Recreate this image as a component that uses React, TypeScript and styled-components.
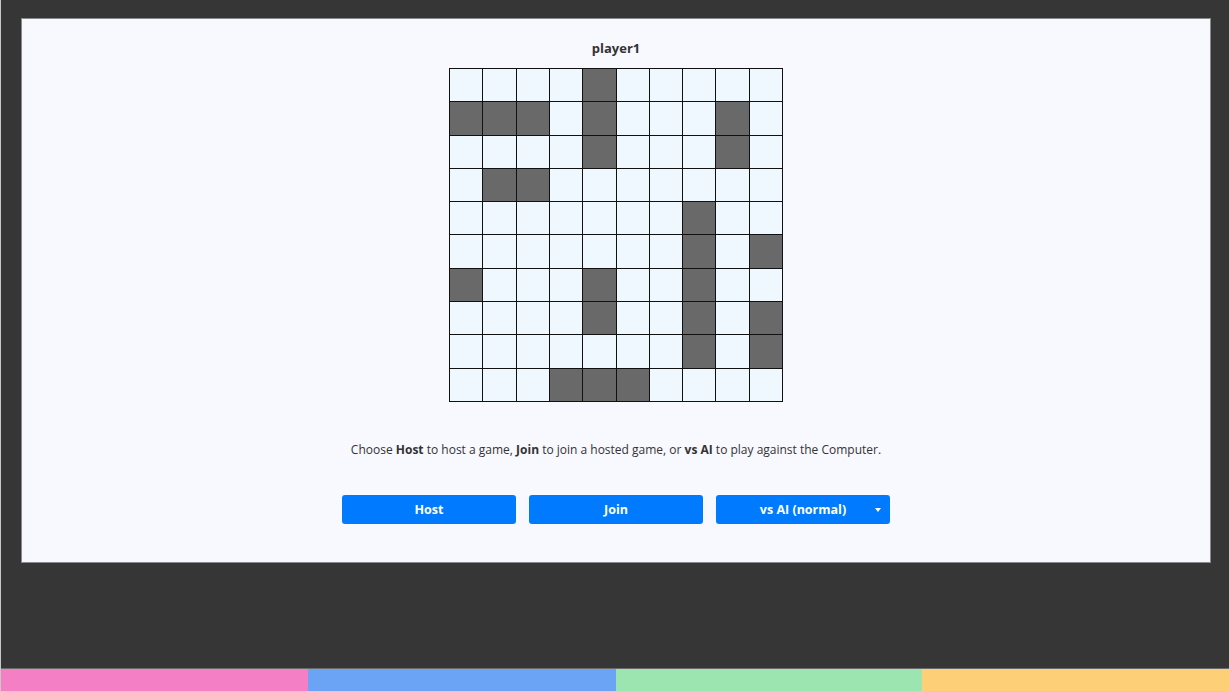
import React from "react";
import styled, { createGlobalStyle } from "styled-components";

const Global = createGlobalStyle`
  html, body { margin: 0; padding: 0; background: #363636; }
  body { font-family: "Open Sans", "Noto Sans", sans-serif; }
  * { box-sizing: border-box; }
`;

const Page = styled.div`
  display: flex;
  flex-direction: column;
  height: 692px;
  border-left: 1px solid #c8c8c8;
  border-bottom: 1px solid #d0d0d0;
  background: #363636;
`;

const Main = styled.div`
  flex: 1;
  padding: 18px 18px 0 20px;
`;

const Panel = styled.section`
  height: 545px;
  background: #f8f8ff;
  border: 1px solid #8a8a8a;
  display: flex;
  flex-direction: column;
  align-items: center;
  padding-top: 19px;
`;

const Title = styled.h2`
  margin: 0;
  font-size: 13px;
  line-height: 20px;
  font-weight: 700;
  color: #333;
`;

const Board = styled.div`
  margin-top: 10px;
  display: grid;
  grid-template-columns: repeat(10, 32.3px);
  grid-auto-rows: 32.3px;
  gap: 1px;
  padding: 1px;
  background: #111;
`;

const Cell = styled.div<{ $ship: boolean }>`
  background: ${(p) => (p.$ship ? "#696969" : "#f0f8ff")};
`;

const Hint = styled.p`
  margin: 38px 0 0;
  font-size: 12px;
  line-height: 20px;
  color: #333;
  b { font-weight: 700; }
`;

const Buttons = styled.div`
  margin-top: 35px;
  display: flex;
  gap: 13px;
`;

const Button = styled.button`
  position: relative;
  width: 174px;
  height: 29px;
  border: none;
  border-radius: 3px;
  background: #007bff;
  color: #fff;
  font-family: "Open Sans", "Noto Sans", sans-serif;
  font-weight: 700;
  font-size: 12.5px;
  padding: 0;
  cursor: pointer;
`;

const Caret = styled.span`
  position: absolute;
  right: 9px;
  top: 13px;
  width: 0;
  height: 0;
  border-left: 3.5px solid transparent;
  border-right: 3.5px solid transparent;
  border-top: 4px solid #fff;
`;

const ColorBar = styled.div`
  display: grid;
  grid-template-columns: 307px 308px 306px 1fr;
  height: 23px;
  border-top: 1px solid #6a6a6a;
`;

const Swatch = styled.div<{ $c: string }>`
  background: ${(p) => p.$c};
`;

const ships: Array<[number, number]> = [
  [0, 4],
  [1, 0], [1, 1], [1, 2], [1, 4], [1, 8],
  [2, 4], [2, 8],
  [3, 1], [3, 2],
  [4, 7],
  [5, 7], [5, 9],
  [6, 0], [6, 4], [6, 7],
  [7, 4], [7, 7], [7, 9],
  [8, 7], [8, 9],
  [9, 3], [9, 4], [9, 5],
];
const shipSet = new Set(ships.map(([r, c]) => r * 10 + c));

export default function App() {
  return (
    <>
      <Global />
      <Page>
        <Main>
          <Panel>
            <Title>player1</Title>
            <Board>
              {Array.from({ length: 100 }, (_, i) => (
                <Cell key={i} $ship={shipSet.has(i)} />
              ))}
            </Board>
            <Hint>
              Choose <b>Host</b> to host a game, <b>Join</b> to join a hosted game, or <b>vs AI</b> to play against the Computer.
            </Hint>
            <Buttons>
              <Button>Host</Button>
              <Button>Join</Button>
              <Button>
                vs AI (normal)
                <Caret />
              </Button>
            </Buttons>
          </Panel>
        </Main>
        <ColorBar>
          <Swatch $c="#f47fc5" />
          <Swatch $c="#6ba3f5" />
          <Swatch $c="#9ce5b0" />
          <Swatch $c="#fdcf76" />
        </ColorBar>
      </Page>
    </>
  );
}
